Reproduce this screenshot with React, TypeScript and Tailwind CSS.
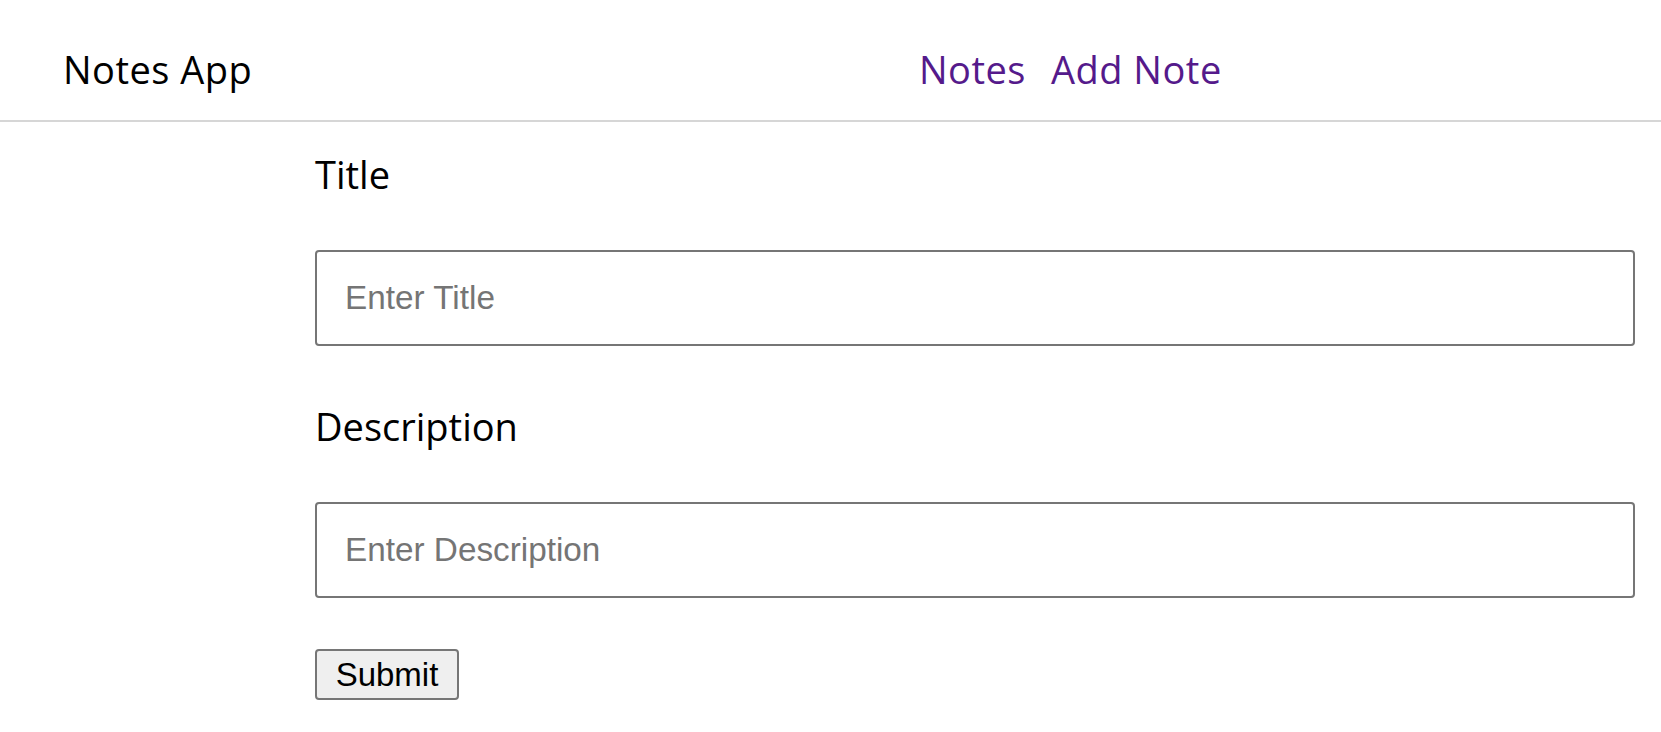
import { useState } from "react";

export default function App() {
  const [title, setTitle] = useState("");
  const [description, setDescription] = useState("");

  return (
    <div className="min-h-screen bg-white font-['Open_Sans',sans-serif] text-black">
      {/* Header */}
      <header className="flex h-[122px] items-start border-b-2 border-[#d6d6d6] pl-[63px] pt-[44px]">
        <div className="w-[856px] text-[38px] leading-[50px] tracking-[0.5px]">Notes App</div>
        <nav className="flex gap-[25px] text-[38px] leading-[50px] tracking-[0.5px] text-[#551a8b]">
          <a href="#">Notes</a>
          <a href="#">Add Note</a>
        </nav>
      </header>

      {/* Form */}
      <form
        onSubmit={(e) => e.preventDefault()}
        className="flex flex-col items-start pl-[315px] pt-[27px]"
      >
        <label htmlFor="title" className="block text-[38px] leading-[50px]">
          Title
        </label>
        <input
          id="title"
          value={title}
          onChange={(e) => setTitle(e.target.value)}
          placeholder="Enter Title"
          className="mt-[51px] h-[96px] w-[1320px] rounded-[4px] border-2 border-[#767676] px-[28px] font-['Liberation_Sans',Arial,sans-serif] text-[33.3px] placeholder:text-[#757575] focus:outline-none"
        />

        <label htmlFor="description" className="mt-[55px] block text-[38px] leading-[50px]">
          Description
        </label>
        <input
          id="description"
          value={description}
          onChange={(e) => setDescription(e.target.value)}
          placeholder="Enter Description"
          className="mt-[51px] h-[96px] w-[1320px] rounded-[4px] border-2 border-[#767676] px-[28px] font-['Liberation_Sans',Arial,sans-serif] text-[33.3px] placeholder:text-[#757575] focus:outline-none"
        />

        <button
          type="submit"
          className="mt-[51px] flex h-[51px] w-[144px] items-center justify-center rounded-[4px] border-2 border-[#767676] bg-[#efefef] font-['Liberation_Sans',Arial,sans-serif] text-[33px] leading-none text-black"
        >
          Submit
        </button>
      </form>
    </div>
  );
}
